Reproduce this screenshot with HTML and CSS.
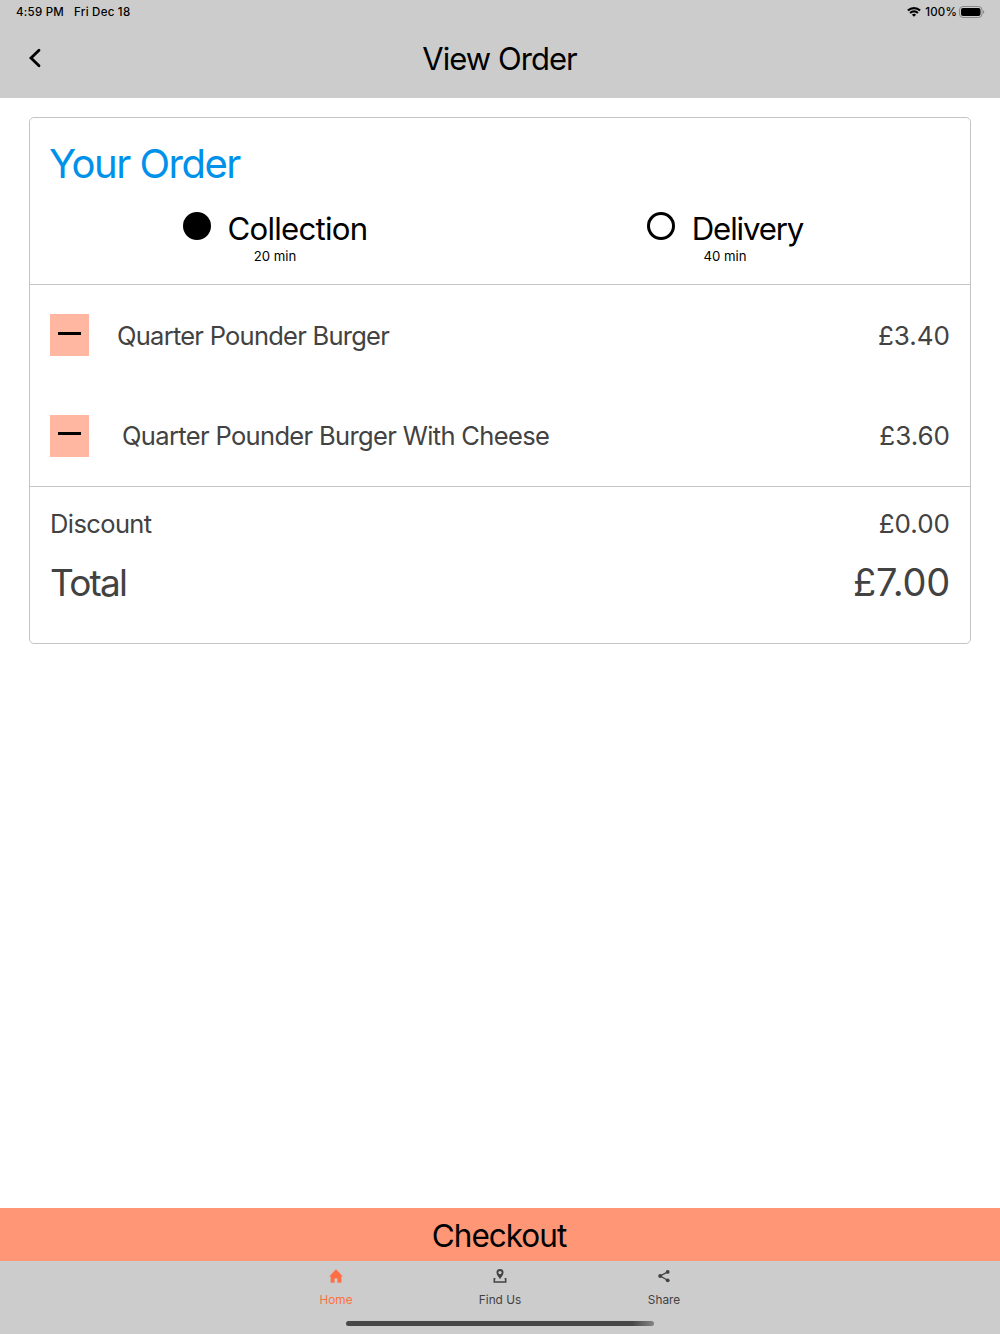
FILE: index.html
```html
<!DOCTYPE html>
<html lang="en">
<head>
    <meta charset="UTF-8">
    <meta name="viewport" content="width=device-width, initial-scale=1.0">
    <title>View Order</title>
    <link rel="stylesheet" href="styles.css">
</head>
<body>
    <header class="header">
        <div class="status-bar">
            <div class="status-left">
                <span class="time">4:59 PM</span>
                <span class="date">Fri Dec 18</span>
            </div>
            <div class="status-right">
                <svg class="wifi" width="14" height="10" viewBox="0 0 14 10">
                    <g fill="none" stroke="#000" stroke-width="2.1">
                        <path d="M0.9 3.6a8.7 8.7 0 0 1 12.2 0"/>
                        <path d="M3.1 6a5.6 5.6 0 0 1 7.8 0"/>
                    </g>
                    <path d="M7 9.8L4.9 7.7a3 3 0 0 1 4.2 0z"/>
                </svg>
                <span class="percent">100%</span>
                <svg class="battery" width="26" height="12" viewBox="0 0 26 12">
                    <rect x="0.5" y="0.5" width="22.5" height="11" rx="3.4" fill="none" stroke="#8a8a8a"/>
                    <rect x="2" y="2" width="19.5" height="8" rx="2"/>
                    <path d="M24.2 4.2c1.3.5 1.3 3.1 0 3.6z" fill="#7c7c7c"/>
                </svg>
            </div>
        </div>
        <div class="nav-bar">
            <a class="back" href="#" aria-label="Back">
                <svg width="14" height="20" viewBox="0 0 14 20">
                    <path d="M11 2.2L3 10l8 7.8" fill="none" stroke="#000" stroke-width="2.8" stroke-linecap="round"/>
                </svg>
            </a>
            <h1 class="page-title">View Order</h1>
        </div>
    </header>

    <main class="content">
        <div class="card">
            <section class="order-type">
                <h2 class="card-title">Your Order</h2>
                <div class="options">
                    <div class="option">
                        <div class="option-row">
                            <span class="radio selected"></span>
                            <span class="option-name collection">Collection</span>
                        </div>
                        <p class="option-time">20 min</p>
                    </div>
                    <div class="option">
                        <div class="option-row">
                            <span class="radio"></span>
                            <span class="option-name delivery">Delivery</span>
                        </div>
                        <p class="option-time">40 min</p>
                    </div>
                </div>
            </section>

            <section class="items">
                <div class="item">
                    <button class="remove" aria-label="Remove"></button>
                    <span class="item-name burger">Quarter Pounder Burger</span>
                    <span class="price">£3.40</span>
                </div>
                <div class="item">
                    <button class="remove" aria-label="Remove"></button>
                    <span class="item-name cheese">Quarter Pounder Burger With Cheese</span>
                    <span class="price">£3.60</span>
                </div>
            </section>

            <section class="summary">
                <div class="summary-row">
                    <span class="discount">Discount</span>
                    <span class="price">£0.00</span>
                </div>
                <div class="summary-row total">
                    <span class="total-label">Total</span>
                    <span class="total-price">£7.00</span>
                </div>
            </section>
        </div>
    </main>

    <button class="checkout">Checkout</button>

    <footer class="tab-bar">
        <nav class="tabs">
            <a class="tab active" href="#">
                <svg width="14" height="14" viewBox="0 0 14 14">
                    <path d="M7 0.2L0.2 7.4h1.5v6.4h3.8V9.4h3v4.4h3.8V7.4h1.5z" fill="#ff6f43"/>
                </svg>
                <span>Home</span>
            </a>
            <a class="tab" href="#">
                <svg width="14" height="14" viewBox="0 0 14 14">
                    <path fill-rule="evenodd" d="M7 0a3.5 3.5 0 0 0-3.5 3.6C3.5 6.2 5.3 7.3 7 10.2C8.7 7.3 10.5 6.2 10.5 3.6A3.5 3.5 0 0 0 7 0zM7 1.9a1.7 1.7 0 1 1 0 3.4a1.7 1.7 0 0 1 0-3.4z" fill="#424242"/>
                    <path d="M2.4 9.8H1.3v3.2h11.4V9.8h-1.1" fill="none" stroke="#424242" stroke-width="1.5"/>
                </svg>
                <span>Find Us</span>
            </a>
            <a class="tab" href="#">
                <svg width="14" height="14" viewBox="0 0 14 14">
                    <path d="M10.7 2.9L3.2 7l7.5 4.3" fill="none" stroke="#424242" stroke-width="1.3"/>
                    <g fill="#424242">
                        <circle cx="10.7" cy="2.9" r="1.9"/>
                        <circle cx="3.2" cy="7" r="2"/>
                        <circle cx="10.7" cy="11.3" r="1.9"/>
                    </g>
                </svg>
                <span>Share</span>
            </a>
        </nav>
        <div class="home-indicator"></div>
    </footer>
</body>
</html>
```

FILE: styles.css
```css
* {
    box-sizing: border-box;
}

body {
    margin: 0;
    height: 100vh;
    display: flex;
    flex-direction: column;
    font-family: Inter, "Liberation Sans", sans-serif;
    background-color: #fff;
    color: #000;
}

h1, h2, p {
    margin: 0;
    font-weight: 400;
}

a {
    color: inherit;
    text-decoration: none;
}

button {
    border: none;
    padding: 0;
    font-family: inherit;
    color: #000;
}

svg {
    display: block;
}

/* Header */
.header {
    height: 98px;
    background-color: #ccc;
}

.status-bar {
    height: 24px;
    padding: 0 15px 0 16px;
    display: flex;
    justify-content: space-between;
    align-items: center;
    font-size: 11.5px;
    font-weight: 500;
}

.status-left, .status-right {
    display: flex;
    align-items: center;
}

.status-left {
    gap: 10px;
    letter-spacing: 0.25px;
}

.percent {
    margin: 0 2px 0 4px;
    letter-spacing: 0.2px;
}

.nav-bar {
    height: 70px;
    display: grid;
    grid-template-columns: 60px 1fr 60px;
    align-items: center;
}

.back {
    padding: 0 0 3px 28px;
}

.page-title {
    padding-right: 1px;
    font-size: 31px;
    line-height: 40px;
    text-align: center;
    letter-spacing: -0.95px;
}

/* Order card */
.content {
    flex: 1;
    padding: 19px 29px;
}

.card {
    border: 1px solid #c4c4c4;
    border-radius: 5px;
    color: #424242;
}

.order-type {
    height: 166px;
    padding-top: 21px;
}

.card-title {
    padding-left: 19px;
    color: #0091ea;
    font-size: 40px;
    line-height: 50px;
    letter-spacing: -1.5px;
}

.options {
    display: grid;
    grid-template-columns: 490px 410px;
    padding-top: 20px;
    color: #000;
}

.option {
    text-align: center;
}

.option-row {
    height: 40px;
    display: flex;
    justify-content: center;
    align-items: center;
    gap: 17px;
}

.radio {
    width: 28px;
    height: 28px;
    margin-bottom: 6px;
    border: 3px solid #000;
    border-radius: 50%;
}

.radio.selected {
    background-color: #000;
}

.option-name {
    font-size: 31.2px;
    line-height: 40px;
}

.collection {
    letter-spacing: -0.75px;
}

.delivery {
    letter-spacing: -1.15px;
}

.option-time {
    margin-top: -1px;
    font-size: 13.2px;
    line-height: 16px;
}

.items {
    height: 203px;
    padding: 0 20px;
    border-top: 1px solid #c4c4c4;
    border-bottom: 1px solid #c4c4c4;
}

.item {
    height: 100.5px;
    display: flex;
    align-items: center;
}

.remove {
    width: 39px;
    height: 42px;
    padding: 0 1px 4px 0;
    display: flex;
    justify-content: center;
    align-items: center;
    background-color: #ffb7a2;
}

.remove::before {
    content: "";
    width: 23px;
    height: 3px;
    background-color: #000;
}

.item-name {
    flex: 1;
    font-size: 25.5px;
}

.burger {
    padding-left: 28px;
    letter-spacing: -0.75px;
}

.cheese {
    padding-left: 33px;
    letter-spacing: -0.65px;
}

.price {
    font-size: 26px;
}

.summary {
    height: 156px;
    padding: 16px 20px 0;
}

.summary-row {
    height: 41px;
    display: flex;
    justify-content: space-between;
    align-items: center;
    font-size: 26px;
}

.discount {
    font-size: 25.5px;
    letter-spacing: -0.6px;
}

.summary-row.total {
    height: 76px;
    font-size: 38px;
}

.total-label {
    font-size: 37px;
    letter-spacing: -1.8px;
}

.total-price {
    letter-spacing: -0.2px;
}

/* Bottom */
.checkout {
    height: 53px;
    padding: 2px 2px 0 0;
    background-color: #ff9777;
    font-size: 31.5px;
    letter-spacing: -1px;
}

.tab-bar {
    height: 73px;
    background-color: #ccc;
}

.tabs {
    height: 62px;
    display: grid;
    grid-template-columns: repeat(3, 164px);
    justify-content: center;
}

.tab {
    padding-top: 8px;
    display: flex;
    flex-direction: column;
    align-items: center;
    gap: 9px;
    color: #424242;
    font-size: 11.8px;
    line-height: 16px;
}

.tab svg {
    margin-right: 1px;
}

.tab.active {
    color: #ff7043;
}

.home-indicator {
    width: 308px;
    height: 5px;
    margin: -2px auto 0;
    border-radius: 3px;
    background: linear-gradient(to right, #484848 93%, #858585);
}
```
